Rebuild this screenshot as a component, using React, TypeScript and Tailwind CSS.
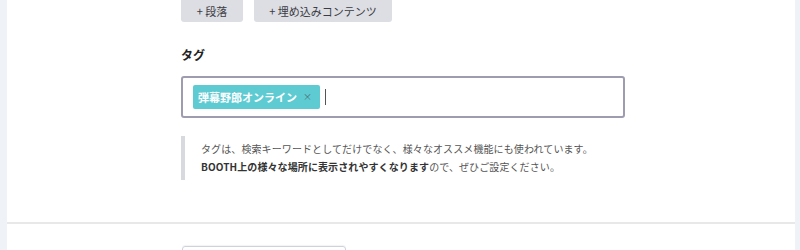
export default function App() {
  const font = "font-['Noto_Sans_CJK_JP','Noto_Sans',sans-serif]";
  const addButton =
    "h-[22px] rounded-b-[3px] bg-[#dcdee3] text-[11px] text-[#3c3c44] flex items-center justify-center";

  return (
    <div className={`${font} w-[800px] h-[250px] overflow-hidden bg-[#eff3f7] pl-[7px] pr-[5px]`}>
      <div className="h-full bg-white flex flex-col">
        <div className="pl-[174px] shrink-0">
          {/* Add buttons */}
          <div className="flex gap-[11px]">
            <button type="button" className={`${addButton} w-[62px]`}>
              + 段落
            </button>
            <button type="button" className={`${addButton} w-[138px]`}>
              + 埋め込みコンテンツ
            </button>
          </div>

          {/* Tags */}
          <h2 className="mt-[25px] text-[12px] leading-[16px] font-bold text-[#222]">タグ</h2>
          <div className="mt-[13px] w-[444px] h-[42px] border-2 border-[#9d9daf] rounded-[3px] flex items-center pl-[10px]">
            <span className="h-[24px] rounded-[2px] bg-[#5ecbd3] flex items-center pl-[5px] pr-[8px] text-white text-[11px] font-bold">
              弾幕野郎オンライン
              <span className="ml-[6px] text-[9px] text-[#4d6f73] font-normal">×</span>
            </span>
            <span className="ml-[5px] w-px h-[16px] bg-[#555]" />
          </div>

          {/* Note */}
          <div className="mt-[18px] w-[444px] border-l-4 border-[#d8d9de] pl-[16px] py-[4px] text-[10px] leading-[18px] text-[#555] tracking-[0.1px]">
            <p>タグは、検索キーワードとしてだけでなく、様々なオススメ機能にも使われています。</p>
            <p>
              <span className="font-bold text-[#333]">BOOTH上の様々な場所に表示されやすくなります</span>
              ので、ぜひご設定ください。
            </p>
          </div>
        </div>

        <div className="mt-[42px] h-[2px] shrink-0 bg-[#e8e8e8]" />

        <div className="pl-[175px] mt-[22px] shrink-0">
          <div className="w-[164px] h-[10px] border border-[#cdd3dc] rounded-t-[3px] shadow-[0_-1px_1px_rgba(0,0,0,0.05)]" />
        </div>
      </div>
    </div>
  );
}
